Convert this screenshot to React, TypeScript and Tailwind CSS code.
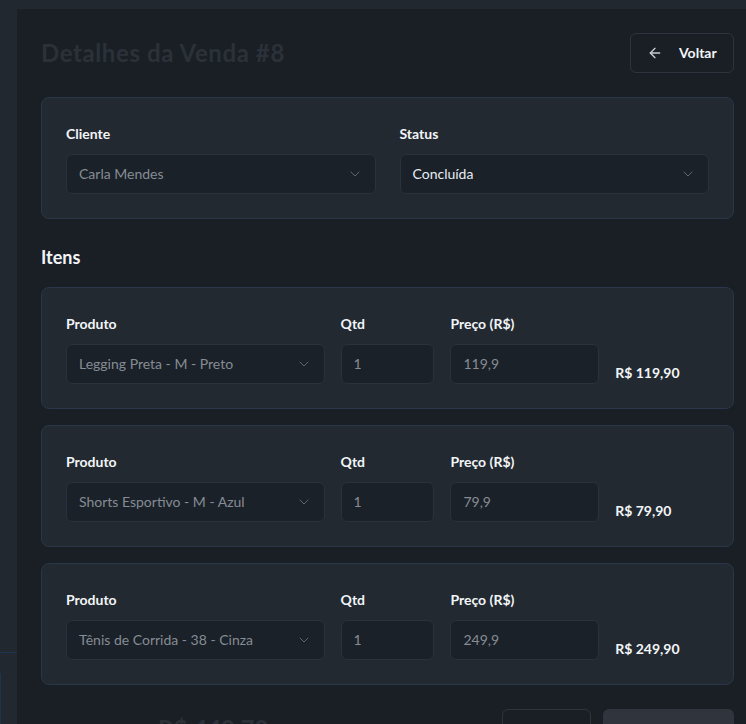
import React from "react";
import { ArrowLeft, ChevronDown } from "lucide-react";

const font = { fontFamily: 'Lato, "Open Sans", "Noto Sans", sans-serif' };

function SelectBox({ value, active }: { value: string; active?: boolean }) {
  return (
    <div className="h-10 w-full rounded-md border border-[#2a323d] bg-[#1b2128] pl-3 pr-3 flex items-center justify-between">
      <span className={"text-sm " + (active ? "text-[#e8edf2]" : "text-[#858c95]")}>{value}</span>
      <ChevronDown size={16} strokeWidth={1.5} className="text-[#5e656e]" />
    </div>
  );
}

function InputBox({ value }: { value: string }) {
  return (
    <div className="h-10 w-full rounded-md border border-[#2a323d] bg-[#1b2128] px-3 flex items-center">
      <span className="text-sm text-[#858c95]">{value}</span>
    </div>
  );
}

function Label({ children }: { children: React.ReactNode }) {
  return <div className="text-sm font-bold text-[#f2f5f8] leading-6 mb-2">{children}</div>;
}

const items = [
  { produto: "Legging Preta - M - Preto", qtd: "1", preco: "119,9", total: "R$ 119,90" },
  { produto: "Shorts Esportivo - M - Azul", qtd: "1", preco: "79,9", total: "R$ 79,90" },
  { produto: "Tênis de Corrida - 38 - Cinza", qtd: "1", preco: "249,9", total: "R$ 249,90" },
];

export default function App() {
  return (
    <div style={font} className="w-[746px] h-[724px] overflow-hidden bg-[#22282f] flex flex-col">
      <div className="h-[9px] shrink-0" />
      <div className="flex flex-1 min-h-0">
        <div className="w-[17px] shrink-0 flex flex-col">
          <div className="h-[643px] shrink-0" />
          <div className="border-t border-[#1e3550] h-[21px] shrink-0" />
          <div className="flex-1 border-l border-[#1e3550]" />
        </div>
        <div className="flex-1 bg-[#1a1f26] pl-6 pr-3 pt-6">
          <div className="flex items-center justify-between">
            <h1 className="text-2xl font-bold tracking-[0.6px] text-[#2b3139] leading-8">Detalhes da Venda #8</h1>
            <button className="h-10 w-[104px] rounded-md border border-[#2c3440] pl-4 flex items-center gap-4 text-sm font-bold text-[#f2f5f8]">
              <ArrowLeft size={16} strokeWidth={2} className="text-[#c9ced4]" />
              Voltar
            </button>
          </div>

          <div className="mt-6 rounded-lg border border-[#2a3748] bg-[#222930] p-6">
            <div className="grid grid-cols-2 gap-6">
              <div>
                <Label>Cliente</Label>
                <SelectBox value="Carla Mendes" />
              </div>
              <div>
                <Label>Status</Label>
                <SelectBox value="Concluída" active />
              </div>
            </div>
          </div>

          <h2 className="mt-6 mb-4 text-lg font-bold leading-7 text-[#f2f5f8]">Itens</h2>

          <div className="flex flex-col gap-4">
            {items.map((it) => (
              <div key={it.produto} className="rounded-lg border border-[#2a3748] bg-[#222930] p-6">
                <div className="grid grid-cols-12 gap-4 items-end">
                  <div className="col-span-5">
                    <Label>Produto</Label>
                    <SelectBox value={it.produto} />
                  </div>
                  <div className="col-span-2">
                    <Label>Qtd</Label>
                    <InputBox value={it.qtd} />
                  </div>
                  <div className="col-span-3">
                    <Label>Preço (R$)</Label>
                    <InputBox value={it.preco} />
                  </div>
                  <div className="col-span-2 text-sm font-bold leading-5 text-[#f2f5f8] pb-[1px]">{it.total}</div>
                </div>
              </div>
            ))}
          </div>

          <div className="mt-6 flex items-center justify-between">
            <div className="flex items-center gap-6">
              <span className="text-sm text-[#2b3139]">Total da Venda:</span>
              <span className="text-2xl font-bold text-[#2b3139]">R$ 449,70</span>
            </div>
            <div className="flex items-center gap-3">
              <button className="h-10 w-[89px] rounded-md border border-[#2c3440] text-sm font-bold text-[#f2f5f8]">Cancelar</button>
              <button className="h-10 w-[131px] rounded-md bg-[#30343c] text-sm font-bold text-[#6b7179]">Salvar Alterações</button>
            </div>
          </div>
        </div>
      </div>
    </div>
  );
}
